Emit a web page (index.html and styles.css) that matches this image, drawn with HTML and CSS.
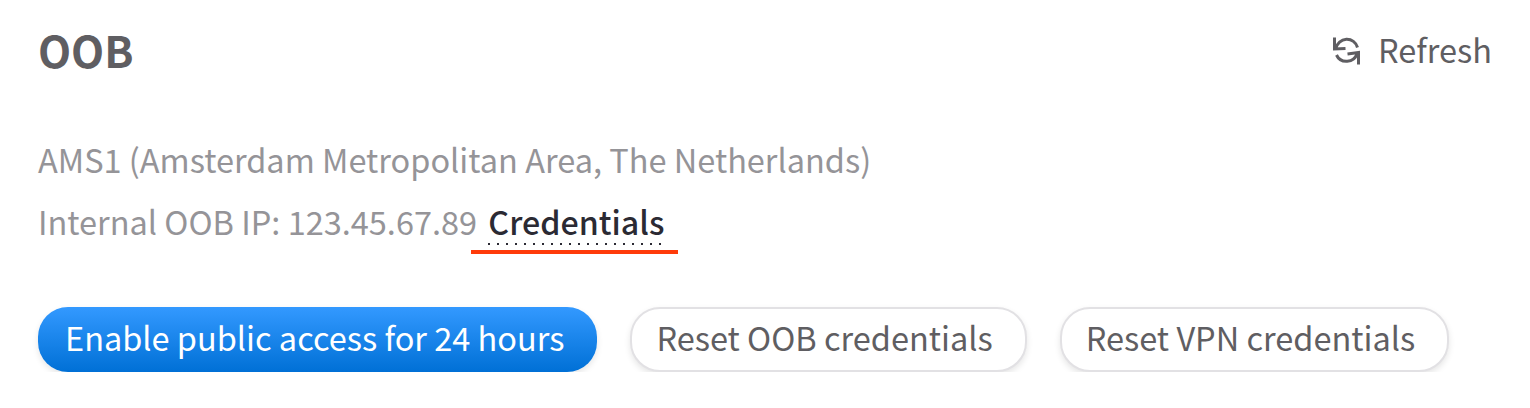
FILE: index.html
```html
<!DOCTYPE html>
<html lang="en">
<head>
    <meta charset="UTF-8">
    <title>OOB</title>
    <link rel="stylesheet" href="styles.css">
</head>
<body>
    <div class="panel">
        <div class="panel-head">
            <h1>OOB</h1>
            <a class="refresh">
                <svg class="refresh-icon" viewBox="0 0 30 30" fill="none" stroke="currentColor" stroke-width="3">
                    <path d="M4 12.5 A11 11 0 0 1 25.5 11.5"/>
                    <path d="M25 17.5 A11 11 0 0 1 4.5 19"/>
                    <path d="M2.5 1.5 L2.5 13 L13.5 12.5"/>
                    <path d="M26.5 28.5 L26.5 16.5 L15.5 18"/>
                </svg>
                Refresh
            </a>
        </div>
        <p class="location">AMS1 (Amsterdam Metropolitan Area, The Netherlands)</p>
        <p class="ip">Internal OOB IP: 123.45.67.89 <span class="credentials">Credentials</span></p>
        <div class="btn-container">
            <button class="btn btn-primary">Enable public access for 24 hours</button>
            <button class="btn">Reset OOB credentials</button>
            <button class="btn">Reset VPN credentials</button>
        </div>
    </div>
</body>
</html>
```

FILE: styles.css
```css
body {
    margin: 0;
    background-color: #ffffff;
    font-family: "Noto Sans CJK SC", "Noto Sans", sans-serif;
    color: #959498;
}
.panel {
    padding: 21px 38px 0 38px;
}
.panel-head {
    display: flex;
    justify-content: space-between;
    align-items: center;
    height: 58px;
}
h1 {
    margin: 0 0 2px 0;
    font-size: 43px;
    font-weight: 700;
    color: #5f5e62;
}
.refresh {
    display: flex;
    align-items: center;
    gap: 16px;
    padding-bottom: 4px;
    font-size: 32.5px;
    color: #5f5e62;
}
.refresh-icon {
    width: 30px;
    height: 30px;
    margin-top: 6px;
}
.location, .ip {
    margin: 0;
    font-size: 32.5px;
    line-height: 62px;
}
.location {
    margin-top: 49px;
}
.credentials {
    position: relative;
    margin-left: 4px;
    font-size: 32.2px;
    font-weight: 500;
    color: #2b2a33;
}
.credentials::before {
    content: "";
    position: absolute;
    left: 0;
    right: 0;
    bottom: -1px;
    height: 2px;
    background: repeating-linear-gradient(90deg, #2b2a33 0 2px, transparent 2px 9px);
}
.credentials::after {
    content: "";
    position: absolute;
    left: -17px;
    right: -14px;
    bottom: -10px;
    height: 4px;
    background-color: #ff3b0a;
}
.btn-container {
    display: flex;
    gap: 33px;
    margin-top: 55px;
}
.btn {
    height: 65px;
    padding: 0 32px 6px 24px;
    font-family: inherit;
    font-size: 32.5px;
    color: #5f5e62;
    background-color: white;
    border: 2px solid #e2e1e4;
    border-radius: 30px;
    box-shadow: 0 3px 6px rgba(0, 0, 0, 0.1);
}
.btn-primary {
    padding: 0 33px 6px 27px;
    color: white;
    border: none;
    background: linear-gradient(#3399ff, #0070d6);
}
```
